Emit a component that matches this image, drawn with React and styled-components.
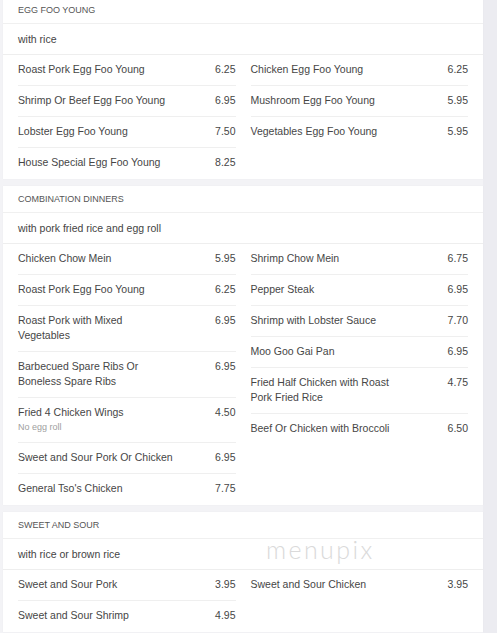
import React from 'react'
import styled, { createGlobalStyle } from 'styled-components'

const GlobalStyle = createGlobalStyle`
  html, body {
    margin: 0;
    padding: 0;
    background: #f3f3f6;
    font-family: 'Liberation Sans', Arial, sans-serif;
    overflow: hidden;
  }
`

const Page = styled.div`
  display: flex;
  height: 633px;
  overflow: hidden;
`

const Main = styled.div`
  width: 480px;
  padding-left: 3px;
  margin-top: -3px;
  display: flex;
  flex-direction: column;
  gap: 7px;
`

const Strip = styled.div`
  flex: 1;
  background: #ececf1;
`

const Card = styled.section`
  position: relative;
  background: #fff;
  padding-bottom: 1px;
  box-shadow: 0 0 1px rgba(0, 0, 0, 0.06);
`

const Header = styled.div`
  padding: 7px 15px;
  font-size: 9px;
  line-height: 12px;
  text-transform: uppercase;
  color: #555;
  border-bottom: 1px solid #f0f0f0;
`

const Sub = styled.div`
  padding: 8px 15px 7px;
  font-size: 10.5px;
  line-height: 15px;
  color: #444;
  border-bottom: 1px solid #eeeeee;
`

const Columns = styled.div`
  display: grid;
  grid-template-columns: 1fr 1fr;
  column-gap: 15px;
  padding: 0 15px;
  align-items: start;
`

const Column = styled.div`
  display: flex;
  flex-direction: column;
`

const Row = styled.div`
  display: flex;
  justify-content: space-between;
  padding: 7px 0 8px;
  font-size: 10.5px;
  line-height: 15px;
  color: #464646;
  & + & {
    border-top: 1px solid #efefef;
  }
`

const Name = styled.div`
  width: 157px;
`

const Note = styled.div`
  font-size: 9px;
  line-height: 14px;
  color: #a0a0a0;
`

const Price = styled.div`
  text-align: right;
`

const Watermark = styled.div`
  position: absolute;
  left: 263px;
  top: 22px;
  font-family: Lato, 'DejaVu Sans', sans-serif;
  font-weight: 300;
  font-size: 25px;
  letter-spacing: 2.4px;
  color: #dadada;
  pointer-events: none;
`

const menu = [
  {
    title: 'Egg Foo Young',
    sub: 'with rice',
    cols: [
      [
        ['Roast Pork Egg Foo Young', '6.25'],
        ['Shrimp Or Beef Egg Foo Young', '6.95'],
        ['Lobster Egg Foo Young', '7.50'],
        ['House Special Egg Foo Young', '8.25'],
      ],
      [
        ['Chicken Egg Foo Young', '6.25'],
        ['Mushroom Egg Foo Young', '5.95'],
        ['Vegetables Egg Foo Young', '5.95'],
      ],
    ],
  },
  {
    title: 'Combination Dinners',
    sub: 'with pork fried rice and egg roll',
    cols: [
      [
        ['Chicken Chow Mein', '5.95'],
        ['Roast Pork Egg Foo Young', '6.25'],
        ['Roast Pork with Mixed Vegetables', '6.95'],
        ['Barbecued Spare Ribs Or Boneless Spare Ribs', '6.95'],
        ['Fried 4 Chicken Wings', '4.50', 'No egg roll'],
        ['Sweet and Sour Pork Or Chicken', '6.95'],
        ["General Tso's Chicken", '7.75'],
      ],
      [
        ['Shrimp Chow Mein', '6.75'],
        ['Pepper Steak', '6.95'],
        ['Shrimp with Lobster Sauce', '7.70'],
        ['Moo Goo Gai Pan', '6.95'],
        ['Fried Half Chicken with Roast Pork Fried Rice', '4.75'],
        ['Beef Or Chicken with Broccoli', '6.50'],
      ],
    ],
  },
  {
    title: 'Sweet and Sour',
    sub: 'with rice or brown rice',
    mark: true,
    cols: [
      [
        ['Sweet and Sour Pork', '3.95'],
        ['Sweet and Sour Shrimp', '4.95'],
      ],
      [['Sweet and Sour Chicken', '3.95']],
    ],
  },
]

export default function App() {
  return (
    <Page>
      <GlobalStyle />
      <Main>
        {menu.map((section) => (
          <Card key={section.title}>
            <Header>{section.title}</Header>
            <Sub>{section.sub}</Sub>
            <Columns>
              {section.cols.map((col, i) => (
                <Column key={i}>
                  {col.map(([name, price, note]) => (
                    <Row key={name}>
                      <Name>
                        {name}
                        {note && <Note>{note}</Note>}
                      </Name>
                      <Price>{price}</Price>
                    </Row>
                  ))}
                </Column>
              ))}
            </Columns>
            {section.mark && <Watermark>menupix</Watermark>}
          </Card>
        ))}
      </Main>
      <Strip />
    </Page>
  )
}
